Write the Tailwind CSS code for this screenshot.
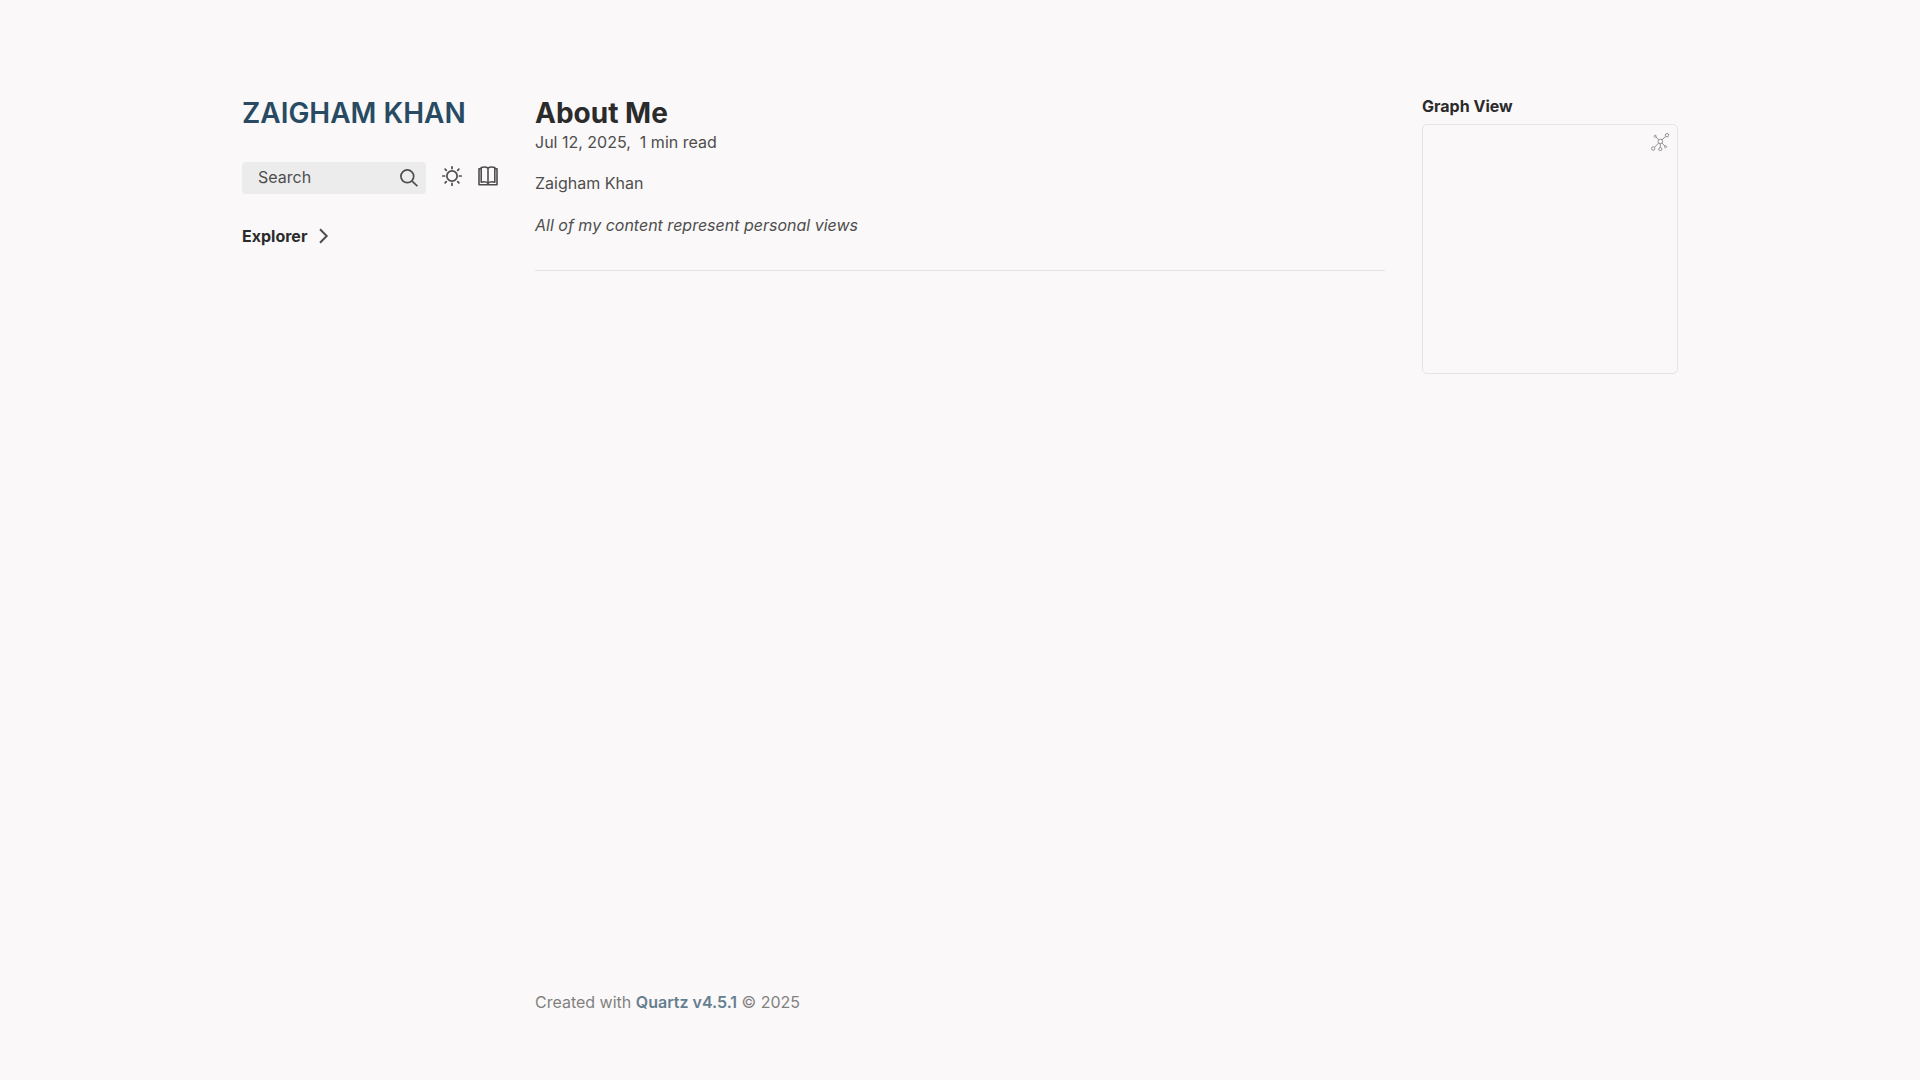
<!DOCTYPE html>
<html lang="en">
<head>
    <meta charset="UTF-8">
    <meta name="viewport" content="width=device-width, initial-scale=1.0">
    <title>About Me</title>
    <script src="https://cdn.jsdelivr.net/npm/@tailwindcss/browser@4"></script>
</head>
<body class="bg-[#faf8f8] text-[#4e4e4e] font-['Inter',sans-serif] text-base">
<div class="mx-auto max-w-[1500px] min-h-screen grid grid-cols-[320px_minmax(0,1fr)_320px] gap-x-[5px]">

    <!-- Left sidebar -->
    <aside class="flex flex-col gap-8 px-8 pt-24 pb-8">
        <h2 class="text-[28px] leading-[34px] font-semibold text-[#284b63]"><a href="#">ZAIGHAM KHAN</a></h2>
        <div class="flex gap-4">
            <button type="button" class="flex-1 h-8 flex items-center justify-between pl-4 pr-2 rounded bg-[#ececec]">
                <span class="pb-0.5">Search</span>
                <svg class="size-[18px]" viewBox="0 0 18 18" fill="none" stroke="currentColor" stroke-width="1.7" aria-hidden="true">
                    <circle cx="7.3" cy="7.3" r="6.4"/>
                    <path d="M11.8 11.8L17.4 17.2"/>
                </svg>
            </button>
            <button type="button" class="size-5 mt-1" aria-label="Dark mode">
                <svg class="size-5" viewBox="0 0 35 35" fill="none" stroke="currentColor" stroke-width="3" stroke-linecap="round" aria-hidden="true">
                    <circle cx="17.5" cy="17.5" r="9"/>
                    <path d="M1.5 17.5h3M30.5 17.5h3M17.5 1.5v3M17.5 30.5v3M5.5 5.5l2 2M27.5 27.5l2 2M5.5 29.5l2-2M27.5 7.5l2-2"/>
                </svg>
            </button>
            <button type="button" class="size-5 mt-1" aria-label="Reader mode">
                <svg class="size-5" viewBox="0 0 20 20" fill="none" stroke="currentColor" stroke-width="1.6" stroke-linejoin="round" aria-hidden="true">
                    <path d="M3.2 2.7H1V18.7H19V2.7H16.8"/>
                    <path d="M10 2.2C8.5 1 5 1 3.2 1.6V16.2C5 15.7 8.5 15.7 10 17.2C11.5 15.7 15 15.7 16.8 16.2V1.6C15 1 11.5 1 10 2.2Z"/>
                    <path d="M10 2.2V18.6"/>
                </svg>
            </button>
        </div>
        <button type="button" class="flex items-center self-start gap-2 h-5 font-bold text-[#2b2b2b]">
            <span>Explorer</span>
            <svg class="size-4" viewBox="0 0 16 16" fill="none" stroke="#4e4e4e" stroke-width="2" aria-hidden="true">
                <path d="M5 1.3L11.7 8L5 14.7"/>
            </svg>
        </button>
    </aside>

    <!-- Article -->
    <main class="flex flex-col pt-24 pb-16">
        <article>
            <h1 class="text-[28px] leading-[34px] font-bold text-[#2b2b2b]">About Me</h1>
            <p class="leading-6"><time datetime="2025-07-12">Jul 12, 2025,</time>&nbsp; <span>1 min read</span></p>
            <p class="mt-4 leading-[26px]">Zaigham Khan</p>
            <p class="mt-4 leading-[26px]"><em>All of my content represent personal views</em></p>
            <hr class="mt-8 border-[#e5e5e5]">
        </article>
        <footer class="mt-auto leading-7 opacity-70">
            <p>Created with <a href="#" class="font-semibold text-[#284b63]">Quartz v4.5.1</a> © 2025</p>
        </footer>
    </main>

    <!-- Right sidebar -->
    <aside class="px-8 pt-24 pb-8">
        <h3 class="leading-5 font-bold text-[#2b2b2b]">Graph View</h3>
        <div class="relative mt-2 h-[250px] border border-[#e5e5e5] rounded-[5px]">
            <button type="button" class="absolute top-2 right-2 size-[18px] opacity-60" aria-label="Global graph">
                <svg class="size-[18px]" viewBox="0 0 18 18" fill="none" stroke="currentColor" aria-hidden="true">
                    <circle cx="9.3" cy="8.4" r="2.3"/>
                    <circle cx="16" cy="2.2" r="1.7"/>
                    <circle cx="2.2" cy="15.5" r="1.7"/>
                    <circle cx="9.3" cy="16.2" r="1.6"/>
                    <circle cx="4.2" cy="3.2" r="1"/>
                    <circle cx="14.5" cy="13.7" r="1"/>
                    <path d="M11 6.8L14.8 3.4M7.7 10L3.4 14.3M9.3 10.7V14.6M5 4L7.6 6.8M11 10L13.8 13"/>
                </svg>
            </button>
        </div>
    </aside>
</div>
</body>
</html>
